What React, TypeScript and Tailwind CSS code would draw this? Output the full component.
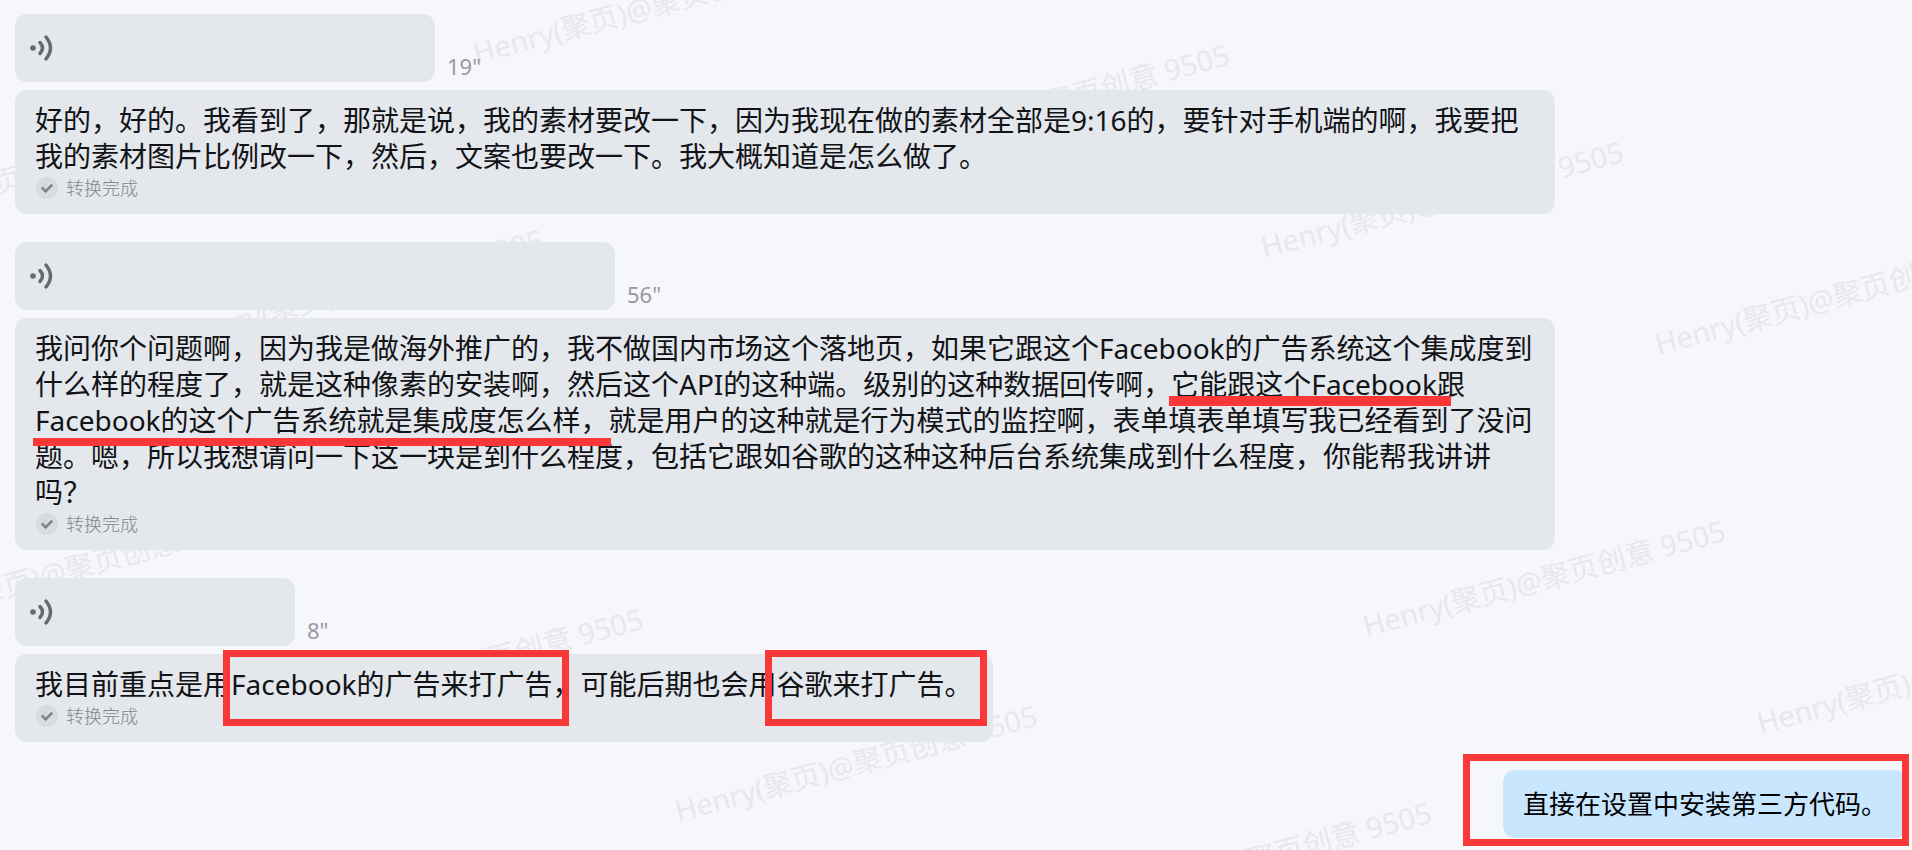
import * as React from 'react';

interface VoiceMessage {
  id: string;
  seconds: number;
  barClass: string;
  transcript: React.ReactNode;
}

interface WatermarkRow {
  x: number;
  y: number;
  count: number;
}

const WATERMARK_TEXT = 'Henry(聚页)@聚页创意 9505';
const WATERMARK_STEP = { x: 394, y: 97 };

const watermarkRows: WatermarkRow[] = [
  { x: 477, y: 67, count: 4 },
  { x: -209, y: 252, count: 6 },
  { x: -109, y: 631, count: 4 },
];

function Underlined({ children, lineClass }: { children: React.ReactNode; lineClass: string }) {
  return (
    <span className="relative inline-block">
      {children}
      <span className={`absolute bg-[#fb3838] ${lineClass}`} />
    </span>
  );
}

function Boxed({ children, boxClass }: { children: React.ReactNode; boxClass: string }) {
  return (
    <span className="relative inline-block">
      {children}
      <span className={`pointer-events-none absolute border-[7px] border-[#fb3838] ${boxClass}`} />
    </span>
  );
}

const messages: VoiceMessage[] = [
  {
    id: 'voice-1',
    seconds: 19,
    barClass: 'w-[420px]',
    transcript:
      '好的，好的。我看到了，那就是说，我的素材要改一下，因为我现在做的素材全部是9:16的，要针对手机端的啊，我要把我的素材图片比例改一下，然后，文案也要改一下。我大概知道是怎么做了。',
  },
  {
    id: 'voice-2',
    seconds: 56,
    barClass: 'w-[600px]',
    transcript: (
      <>
        我问你个问题啊，因为我是做海外推广的，我不做国内市场这个落地页，如果它跟这个Facebook的广告系统这个集成度到什么样的程度了，就是这种像素的安装啊，然后这个API的这种端。级别的这种数据回传啊，
        <Underlined lineClass="-left-0.5 -right-3.5 -bottom-1 h-2.5">它能跟这个Facebook</Underlined>跟
        <Underlined lineClass="-left-0.5 -right-0.5 -bottom-2 h-2">
          Facebook的这个广告系统就是集成度怎么样，
        </Underlined>
        就是用户的这种就是行为模式的监控啊，表单填表单填写我已经看到了没问题。嗯，所以我想请问一下这一块是到什么程度，包括它跟如谷歌的这种这种后台系统集成到什么程度，你能帮我讲讲吗？
      </>
    ),
  },
  {
    id: 'voice-3',
    seconds: 8,
    barClass: 'w-[280px]',
    transcript: (
      <>
        我目前重点是用
        <Boxed boxClass="-left-2 -right-4 -top-4 -bottom-6">Facebook的广告来打广告</Boxed>
        ，可能后期也会用
        <Boxed boxClass="-left-3 -right-3.5 -top-4 -bottom-6">谷歌来打广告。</Boxed>
      </>
    ),
  },
];

function VoiceIcon() {
  return (
    <svg viewBox="0 0 24 28" className="h-7 w-6" fill="none" aria-hidden="true">
      <circle cx="4" cy="14" r="2.8" fill="#666a6e" />
      <path
        d="M11 8.5q5 5.5 0 11M17 3q9 11 0 22"
        stroke="#666a6e"
        strokeWidth="3.4"
        strokeLinecap="round"
      />
    </svg>
  );
}

function DoneIcon() {
  return (
    <svg viewBox="0 0 22 22" className="size-[22px] shrink-0" fill="none" aria-hidden="true">
      <circle cx="11" cy="11" r="11" fill="#dadbdf" />
      <path d="M5.8 10.4l3.8 4 6.6-6.8" stroke="#808388" strokeWidth="2.6" />
    </svg>
  );
}

function Watermark() {
  return (
    <div className="pointer-events-none absolute inset-0 overflow-hidden select-none" aria-hidden="true">
      {watermarkRows.map((row) =>
        Array.from({ length: row.count }, (_, i) => (
          <span
            key={`${row.x}-${i}`}
            className="absolute origin-bottom-left -translate-y-full -rotate-[15deg] text-[29px] leading-none whitespace-nowrap text-[#e6e8ec]"
            style={{ left: row.x + i * WATERMARK_STEP.x, top: row.y + i * WATERMARK_STEP.y }}
          >
            {WATERMARK_TEXT}
          </span>
        ))
      )}
    </div>
  );
}

function VoiceItem({ message }: { message: VoiceMessage }) {
  return (
    <li className="flex max-w-[1540px] flex-col items-start gap-2">
      {/* Voice bar and duration */}
      <div className="flex max-w-full items-end gap-3">
        <button
          type="button"
          aria-label={`播放语音 ${message.seconds} 秒`}
          className={`flex h-[68px] items-center rounded-xl bg-[#e4e7eb] pl-3.5 ${message.barClass}`}
        >
          <VoiceIcon />
        </button>
        <span className="text-[22px] leading-8 text-[#999a9d]">{message.seconds}"</span>
      </div>

      {/* Transcript */}
      <div className="rounded-xl bg-[#e4e7eb] px-5 py-3">
        <p className="text-[28px] leading-9 text-[#111317]">{message.transcript}</p>
        <div className="flex h-7 items-center gap-2 pl-px text-lg font-light text-[#85888c]">
          <DoneIcon />
          <span>转换完成</span>
        </div>
      </div>
    </li>
  );
}

export default function App() {
  return (
    <main
      lang="zh-CN"
      className="relative min-h-screen bg-[#f6f7fb] pt-3.5 pr-[5px] pb-3 pl-[15px] font-['Noto_Sans','Noto_Sans_CJK_SC',sans-serif]"
    >
      <Watermark />
      <ul className="relative flex flex-col gap-7">
        {messages.map((message) => (
          <VoiceItem key={message.id} message={message} />
        ))}

        {/* Reply */}
        <li className="flex justify-end">
          <div className="relative rounded-xl bg-[#c9e6ff] px-5 py-4">
            <p className="text-[26px] leading-9 text-black">直接在设置中安装第三方代码。</p>
            <span className="pointer-events-none absolute -top-4 -right-0.5 -bottom-2 -left-10 border-[7px] border-[#fb3838]" />
          </div>
        </li>
      </ul>
    </main>
  );
}
